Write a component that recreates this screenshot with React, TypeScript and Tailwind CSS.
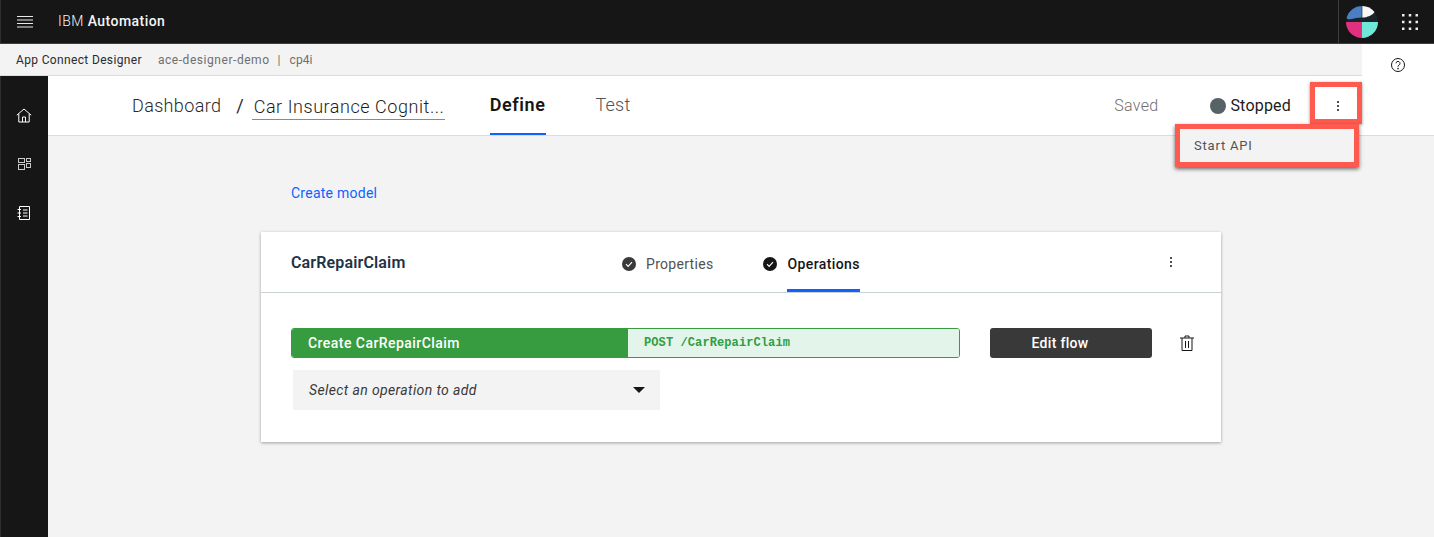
import * as React from "react"

const sans = "font-['Roboto','Noto_Sans',sans-serif]"

function CheckDot({ className }: { className: string }) {
  return (
    <svg viewBox="0 0 14 14" className={className} aria-hidden="true">
      <circle cx="7" cy="7" r="7" fill="currentColor" />
      <path d="M4 7.2l2.1 2.1L10 5.2" fill="none" stroke="#fff" strokeWidth="1.2" />
    </svg>
  )
}

function Kebab({ color = "#161616" }: { color?: string }) {
  return (
    <svg viewBox="0 0 4 12" className="w-1 h-3" aria-hidden="true">
      <circle cx="2" cy="2" r="1" fill={color} />
      <circle cx="2" cy="6" r="1" fill={color} />
      <circle cx="2" cy="10" r="1" fill={color} />
    </svg>
  )
}

function TopBar() {
  return (
    <header className="flex h-[44px] bg-[#161616] border-b border-[#3d3d3d] border-l-[1px] border-l-[#2e2e2e]">
      <button className="w-[47px] flex items-center justify-center">
        <svg viewBox="0 0 16 12" className="w-4 h-3" aria-hidden="true">
          <path d="M0 .5h16M0 4h16M0 7.5h16M0 11h16" stroke="#e8e8e8" strokeWidth="1" fill="none" />
        </svg>
      </button>
      <div className="flex items-center text-[14px] text-[#f4f4f4] ml-[10px] tracking-[0.45px]">
        <span className="font-light">IBM&nbsp;</span>
        <span className="font-medium">Automation</span>
      </div>
      <div className="ml-auto flex h-full">
        <div className="w-[48px] border-l border-[#3d3d3d] flex items-center justify-center pr-[1px]">
          <svg viewBox="0 0 32 32" className="w-8 h-8" aria-hidden="true">
            <circle cx="16" cy="16" r="16" fill="#1a2329" />
            <path d="M15.7 0A16 16 0 0 0 .6 11.5C1 13 2 13.6 4 13.2 8 12.4 12 11.4 15.7 11.4z" fill="#4a7fc4" />
            <path d="M16.3 0A16 16 0 0 1 28.5 6C27 9 21 11.6 16.3 11.6z" fill="#f7f7f7" />
            <path d="M16 16H0A16 16 0 0 0 16 32z" fill="#e0307e" />
            <path d="M16 16h16A16 16 0 0 1 16 32z" fill="#6fe8d8" />
          </svg>
        </div>
        <button className="w-[48px] flex items-center justify-center">
          <svg viewBox="0 0 16 16" className="w-4 h-4" aria-hidden="true" fill="#ececec">
            {[0, 6.75, 13.5].map((y) =>
              [0, 6.75, 13.5].map((x) => <rect key={`${x}-${y}`} x={x} y={y} width="2.5" height="2.5" />)
            )}
          </svg>
        </button>
      </div>
    </header>
  )
}

function SubBar() {
  return (
    <div className="flex h-[32px] bg-white">
      <div className="w-[1362px] bg-[#f3f3f3] border-b border-[#dcdcdc] flex items-center pl-4 text-[12px]">
        <span className="text-[#2a2a2a] tracking-[0.35px]">App Connect Designer</span>
        <span className="ml-[16px] text-[#6f6f6f] tracking-[0.55px]">ace-designer-demo</span>
        <span className="ml-[8px] text-[#6f6f6f]">|</span>
        <span className="ml-[9px] text-[#6f6f6f] tracking-[0.1px]">cp4i</span>
      </div>
      <div className="flex-1 flex justify-center pt-[13px]">
        <svg viewBox="0 0 16 16" className="w-4 h-4" aria-hidden="true">
          <circle cx="8" cy="8" r="6.5" fill="none" stroke="#161616" strokeWidth="1" />
          <path d="M6 6.3a2 2 0 1 1 3 1.8c-.7.4-1 .8-1 1.6" fill="none" stroke="#161616" strokeWidth="1" />
          <circle cx="8" cy="11.6" r=".8" fill="#161616" />
        </svg>
      </div>
    </div>
  )
}

function SideNav() {
  return (
    <aside className="w-[48px] shrink-0 bg-[#161616] border-l border-[#2e2e2e] flex flex-col items-center pt-[31px] gap-[33px] pr-[1px]">
      <svg viewBox="0 0 16 16" className="w-4 h-4" fill="none" stroke="#fff" strokeWidth="1" aria-hidden="true">
        <path d="M.8 8.2L8 2l7.2 6.2M2.8 6.8V15h10.4V6.8M6.5 15v-5h3v5" />
      </svg>
      <svg viewBox="0 0 16 16" className="w-4 h-4" fill="none" stroke="#c8c8c8" strokeWidth="1" aria-hidden="true">
        <rect x="2.5" y="2.5" width="6" height="4" />
        <rect x="10.5" y="2.5" width="4" height="3" />
        <rect x="10.5" y="7.5" width="4" height="4" />
        <rect x="2.5" y="8.5" width="6" height="5" />
      </svg>
      <svg viewBox="0 0 16 16" className="w-4 h-4" fill="none" stroke="#fff" strokeWidth="1" aria-hidden="true">
        <path d="M3.5 1.5h10v13h-10zM1.5 4.5h3.5M1.5 8h3.5M1.5 11.5h3.5M7 5h4.5M7 8h4.5M7 11h4.5" />
      </svg>
    </aside>
  )
}

function PageHeader() {
  return (
    <div className="relative h-[60px] bg-white border-b border-[#dcdcdc] flex items-center pl-[84px]">
      <span className="text-[18px] font-light text-[#2a2a2a] tracking-[0.35px]">Dashboard</span>
      <span className="ml-[15px] text-[18px] text-[#2a2a2a]">/</span>
      <div className="ml-[8px] mb-[2px] pt-[4px] w-[193px] h-[30px] border-b border-[#8a8a8a] flex items-center pl-[2px] text-[18px] text-[#1c1c1c] font-light tracking-[0.55px] whitespace-nowrap overflow-hidden">
        Car Insurance Cognit...
      </div>
      <div className="ml-[45px] h-full flex gap-[50px] text-[18px] relative">
        <div className="h-full flex items-center border-b-2 border-[#0f62fe] font-semibold text-[#161616] mb-[-1px] tracking-[0.6px]">Define</div>
        <div className="h-full flex items-center text-[#525252] pb-[2px] font-light tracking-[0.2px]">Test</div>
      </div>
      <div className="ml-auto flex items-center">
        <span className="text-[16px] text-[#6f6f6f] font-light tracking-[0.3px]">Saved</span>
        <span className="ml-[52px] w-4 h-4 rounded-full bg-[#566266]" />
        <span className="ml-[4px] text-[16px] text-[#1c1c1c] tracking-[0.2px]">Stopped</span>
        <button className="ml-[45px] mr-[94px] w-[4px] flex items-center justify-center">
          <Kebab />
        </button>
      </div>

      {/* annotation boxes drawn over the page */}
      <div className="absolute left-[1262px] top-[6px] w-[52px] h-[42px] border-[5px] border-[#ff5a4f] shadow-[0_1px_3px_rgba(0,0,0,0.45)]" />
      <div className="absolute z-10 left-[1127px] top-[48px] w-[184px] h-[43px] border-[5px] border-[#ff5a4f] bg-[#f3f3f3] shadow-[0_2px_4px_rgba(0,0,0,0.6)] flex items-center pl-[14px] text-[13px] text-[#525252] tracking-[0.8px]">
        Start API
      </div>
    </div>
  )
}

function ModelCard() {
  return (
    <section className="w-[960px] h-[210px] bg-white shadow-[0_1px_3px_rgba(0,0,0,0.35)]">
      <div className="h-[61px] border-b border-[#c8d2d2] flex pl-[30px]">
        <h2 className="self-center pt-[2px] w-[331px] text-[16px] font-semibold text-[#1f3347] tracking-[0.15px]">CarRepairClaim</h2>
        <div className="flex items-center pt-[4px] text-[#525252] text-[14px] tracking-[0.3px]">
          <CheckDot className="w-[14px] h-[14px] text-[#3a3a3a]" />
          <span className="ml-[10px]">Properties</span>
        </div>
        <div className="ml-[50px] flex items-center">
          <CheckDot className="w-[14px] h-[14px] mt-[4px] text-[#161616]" />
          <span className="ml-[10px] h-full flex items-center border-b-[3px] border-[#0f62fe] pt-[7px] text-[14px] font-medium text-[#161616] tracking-[0.4px]">Operations</span>
        </div>
        <button className="ml-[309px] flex items-center">
          <Kebab />
        </button>
      </div>
      <div className="pl-[30px] pt-[35px]">
        <div className="flex items-start">
          <div className="w-[669px] h-[30px] flex rounded-[3px] border border-[#379c3f] overflow-hidden">
            <div className="w-[336px] bg-[#379c3f] flex items-center pl-[16px] text-white text-[14px] font-medium tracking-[0.45px]">Create CarRepairClaim</div>
            <div className="flex-1 bg-[#e3f5ea] flex items-center pl-[16px] text-[#2f9e44] text-[12px] font-['Liberation_Mono',monospace] font-bold tracking-[0.1px]">POST /CarRepairClaim</div>
          </div>
          <button className="ml-[30px] w-[162px] h-[30px] rounded-[3px] bg-[#393939] text-white text-[14px] font-medium tracking-[0.3px] pr-[27px] pl-[5px]">Edit flow</button>
          <svg viewBox="0 0 16 16" className="ml-[27px] mt-[7px] w-4 h-4" fill="none" stroke="#161616" strokeWidth="1" aria-hidden="true">
            <path d="M1 3h14M6 3V1h4v2M3 3v12.5h10V3M6.5 6v7M9.5 6v7" />
          </svg>
        </div>
        <div className="ml-[2px] mt-[12px] w-[367px] h-[40px] bg-[#f3f3f3] flex items-center justify-between pl-[16px] pr-[15px] text-[14px] italic text-[#393939] tracking-[0.38px]">
          Select an operation to add
          <span className="w-0 h-0 border-l-[6px] border-r-[6px] border-t-[6px] border-l-transparent border-r-transparent border-t-[#161616]" />
        </div>
      </div>
    </section>
  )
}

export default function App() {
  return (
    <div className={`h-[537px] overflow-hidden flex flex-col bg-white ${sans}`}>
      <TopBar />
      <SubBar />
      <div className="flex flex-1">
        <SideNav />
        <main className="flex-1 bg-[#f3f3f3] flex flex-col">
          <PageHeader />
          <div className="pl-[213px] pt-[48px]">
            <a className="block pl-[30px] text-[14px] leading-[18px] text-[#0f62fe] tracking-[0.25px]">Create model</a>
            <div className="mt-[30px]">
              <ModelCard />
            </div>
          </div>
        </main>
      </div>
    </div>
  )
}
